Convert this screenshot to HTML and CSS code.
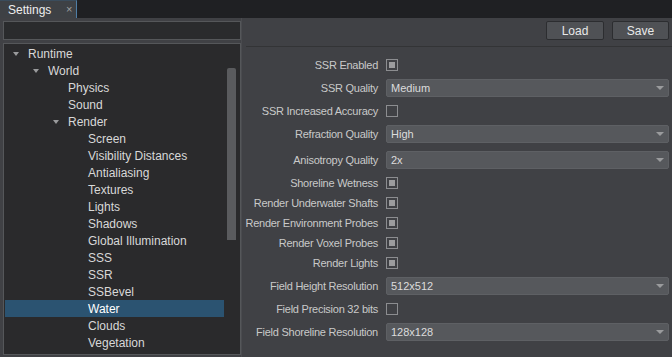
FILE: index.html
```html
<!DOCTYPE html>
<html lang="en">
<head>
    <meta charset="UTF-8">
    <title>Settings</title>
    <link rel="stylesheet" href="styles.css">
</head>
<body>
    <div class="tabbar">
        <div class="tab">Settings <span class="tab-close">×</span></div>
    </div>

    <div class="main">
        <div class="left">
            <div class="search"></div>
            <div class="tree">
                <div class="node lvl0 open">Runtime</div>
                <div class="node lvl1 open">World</div>
                <div class="node lvl2">Physics</div>
                <div class="node lvl2">Sound</div>
                <div class="node lvl2 open">Render</div>
                <div class="node lvl3">Screen</div>
                <div class="node lvl3">Visibility Distances</div>
                <div class="node lvl3">Antialiasing</div>
                <div class="node lvl3">Textures</div>
                <div class="node lvl3">Lights</div>
                <div class="node lvl3">Shadows</div>
                <div class="node lvl3">Global Illumination</div>
                <div class="node lvl3">SSS</div>
                <div class="node lvl3">SSR</div>
                <div class="node lvl3">SSBevel</div>
                <div class="node lvl3 selected">Water</div>
                <div class="node lvl3">Clouds</div>
                <div class="node lvl3">Vegetation</div>
                <div class="scrollbar"></div>
            </div>
        </div>

        <div class="right">
            <div class="toolbar">
                <button class="button">Load</button>
                <button class="button">Save</button>
            </div>
            <div class="form">
                <div class="row check"><span class="label">SSR Enabled</span><span class="checkbox checked"></span></div>
                <div class="row combo"><span class="label">SSR Quality</span><div class="select">Medium</div></div>
                <div class="row check"><span class="label">SSR Increased Accuracy</span><span class="checkbox"></span></div>
                <div class="row combo"><span class="label">Refraction Quality</span><div class="select">High</div></div>
                <div class="row combo"><span class="label">Anisotropy Quality</span><div class="select">2x</div></div>
                <div class="row check"><span class="label">Shoreline Wetness</span><span class="checkbox checked"></span></div>
                <div class="row check"><span class="label">Render Underwater Shafts</span><span class="checkbox checked"></span></div>
                <div class="row check"><span class="label">Render Environment Probes</span><span class="checkbox checked"></span></div>
                <div class="row check"><span class="label">Render Voxel Probes</span><span class="checkbox checked"></span></div>
                <div class="row check"><span class="label">Render Lights</span><span class="checkbox checked"></span></div>
                <div class="row combo"><span class="label">Field Height Resolution</span><div class="select">512x512</div></div>
                <div class="row check"><span class="label">Field Precision 32 bits</span><span class="checkbox"></span></div>
                <div class="row combo"><span class="label">Field Shoreline Resolution</span><div class="select">128x128</div></div>
            </div>
        </div>
    </div>
</body>
</html>
```

FILE: styles.css
```css
body {
    margin: 0;
    padding: 0;
    width: 672px;
    height: 357px;
    overflow: hidden;
    background-color: #202124;
    font-family: "Liberation Sans", Arial, sans-serif;
    font-size: 12px;
    color: #d4d4d4;
}
.tabbar {
    height: 18px;
    background-color: #1f2023;
    display: flex;
}
.tab {
    width: 77px;
    height: 18px;
    box-sizing: border-box;
    padding: 2px 0 0 8px;
    background-color: #3e4145;
    border-right: 1px solid #4f7ea6;
    border-top: 1px solid #3a4c5c;
    color: #eeeeee;
    font-size: 12px;
    position: relative;
}
.tab-close {
    position: absolute;
    left: 66px;
    top: 2px;
    color: #a0a0a0;
    font-size: 11px;
}
.main {
    display: flex;
    height: 339px;
    background-color: #404145;
}
.left {
    width: 241px;
    padding: 3px 0 0 3px;
    box-sizing: border-box;
    display: flex;
    flex-direction: column;
    gap: 3px;
}
.search {
    height: 19px;
    box-sizing: border-box;
    background-color: #2a2b2d;
    border: 1px solid #55575a;
}
.tree {
    height: 312px;
    box-sizing: border-box;
    background-color: #2a2a2c;
    border: 1px solid #55575a;
    padding-top: 1px;
    position: relative;
}
.node {
    height: 17px;
    line-height: 19px;
    margin-left: 1px;
    width: 219px;
    box-sizing: border-box;
    position: relative;
    color: #d8d8d8;
    white-space: nowrap;
}
.lvl0 { padding-left: 23px; }
.lvl1 { padding-left: 43px; }
.lvl2 { padding-left: 63px; }
.lvl3 { padding-left: 83px; }
.open::before {
    content: "";
    position: absolute;
    top: 7px;
    border-left: 3.5px solid transparent;
    border-right: 3.5px solid transparent;
    border-top: 4px solid #9a9b9d;
}
.lvl0.open::before { left: 8px; }
.lvl1.open::before { left: 28px; }
.lvl2.open::before { left: 48px; }
.selected {
    background-color: #2b5371;
    color: #ffffff;
}
.scrollbar {
    position: absolute;
    left: 223px;
    top: 24px;
    width: 9px;
    height: 172px;
    background-color: #5a5b5e;
    border-radius: 2px 2px 0 0;
}
.right {
    flex: 1;
    border-left: 1px solid #4a4b4f;
}
.toolbar {
    height: 29px;
    box-sizing: border-box;
    border-bottom: 1px solid #333436;
    margin-left: 4px;
    display: flex;
    justify-content: flex-end;
    align-items: flex-start;
    gap: 8px;
    padding: 3px 3px 0 0;
}
.button {
    width: 58px;
    height: 19px;
    padding: 0;
    background-color: #4f5155;
    border: 1px solid #2c2d30;
    border-radius: 2px;
    color: #e8e8e8;
    font-family: "Liberation Sans", Arial, sans-serif;
    font-size: 12px;
}
.button:last-child { width: 57px; }
.form {
    display: grid;
    grid-template-columns: 144px 1fr;
    row-gap: 3px;
    padding: 9px 3px 0 0;
}
.row {
    display: contents;
}
.label {
    padding-right: 8px;
    font-size: 11px;
    letter-spacing: -0.25px;
    color: #c9c9c9;
    white-space: nowrap;
    display: flex;
    align-items: center;
    justify-content: flex-end;
}
.check .label { height: 17px; }
.combo .label { height: 23px; }
.checkbox {
    width: 12px;
    height: 12px;
    box-sizing: border-box;
    border: 1px solid #8c8d90;
    align-self: center;
    position: relative;
}
.checkbox.checked::after {
    content: "";
    position: absolute;
    left: 2px;
    top: 2px;
    width: 6px;
    height: 6px;
    background-color: #9c9c9e;
}
.select {
    height: 18px;
    align-self: center;
    box-sizing: border-box;
    background-color: #56585c;
    border: 1px solid #5e6064;
    border-radius: 2px;
    padding-left: 4px;
    line-height: 16px;
    font-size: 11px;
    color: #dcdcdc;
    position: relative;
}
.select::after {
    content: "";
    position: absolute;
    right: 4px;
    top: 6px;
    border-left: 4px solid transparent;
    border-right: 4px solid transparent;
    border-top: 4px solid #9a9b9d;
}
```
